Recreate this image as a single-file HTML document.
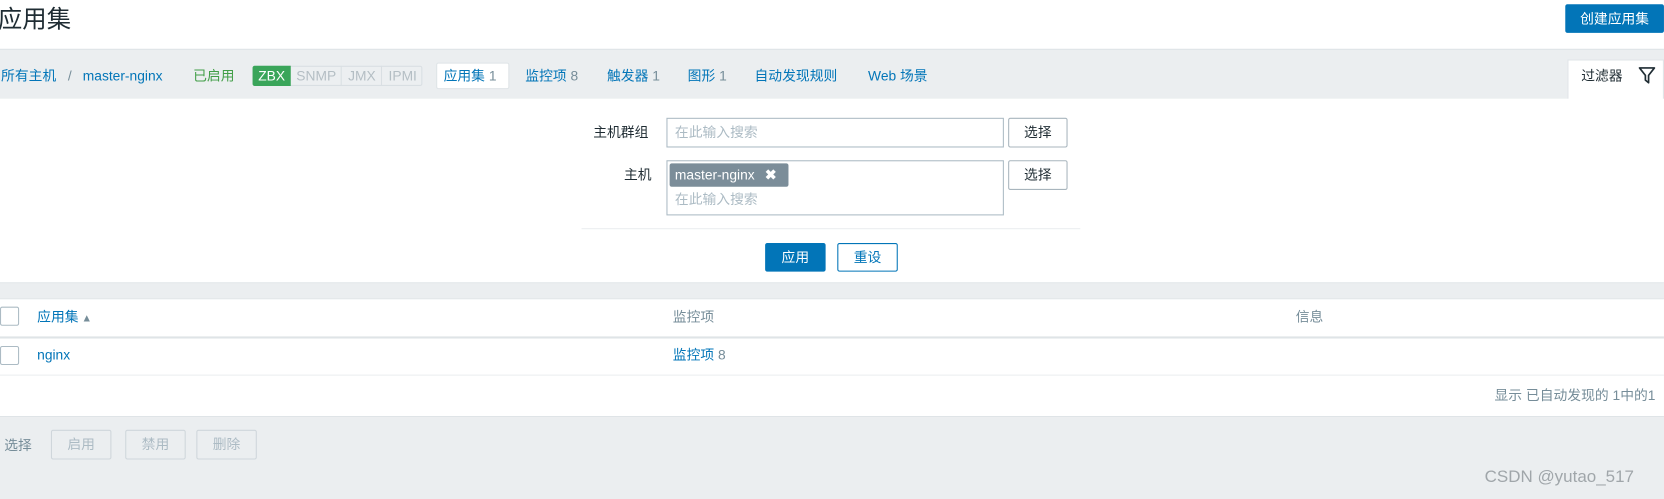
<!DOCTYPE html>
<html><head><meta charset="utf-8"><style>
*{box-sizing:border-box;margin:0;padding:0}
html,body{width:1664px;height:498px;overflow:hidden;background:#ebeef0}
#w{position:absolute;left:0;top:0;width:1568px;height:470px;transform:scale(1.0612);transform-origin:0 0;font-family:"Liberation Sans","Noto Sans CJK SC",sans-serif;font-size:13px;color:#1f2c33}
.a{position:absolute;white-space:nowrap;line-height:18px}
.l{color:#0275b8}
.g{color:#768d99}
.btn{position:absolute;border:1px solid #0275b8;background:#0275b8;color:#fff;border-radius:2px;text-align:center}
.wb{position:absolute;border:1px solid #a8b5bd;background:#fff;border-radius:2px;text-align:center;line-height:25px}
.cb{position:absolute;width:18px;height:18px;border:1px solid #acbbc4;border-radius:2px;background:#fff}
.db{position:absolute;border:1px solid #cfd6db;background:#ebeef0;color:#acbbc4;border-radius:2px;text-align:center;line-height:26px;width:57px;height:28px}
</style></head><body><div id="w">
<div class="a" style="left:0;top:0;width:1568px;height:46px;background:#fff"></div>
<div class="a" style="left:-2px;top:3px;font-size:23px;line-height:30px;color:#1f2c33">应用集</div>
<div class="btn" style="left:1475px;top:4px;width:93px;height:27px;line-height:25px">创建应用集</div>
<div class="a" style="left:0;top:46px;width:1568px;height:1px;background:#dfe4e7"></div>
<div class="a l" style="left:1px;top:63px">所有主机</div>
<div class="a g" style="left:64px;top:63px">/</div>
<div class="a l" style="left:78px;top:63px">master-nginx</div>
<div class="a" style="left:182px;top:63px;color:#429e47">已启用</div>
<div class="a" style="left:238px;top:62px;width:160px;height:19px;border:1px solid #d9dfe3;border-radius:2px;background:#eceff1"></div>
<div class="a" style="left:238px;top:62px;width:36px;height:19px;background:#3aa55a;color:#fff;text-align:center;line-height:19px;border-radius:2px 0 0 2px">ZBX</div>
<div class="a" style="left:275px;top:62px;width:47px;line-height:19px;text-align:center;color:#b4bec4;border-right:1px solid #d9dfe3">SNMP</div>
<div class="a" style="left:323px;top:62px;width:37px;line-height:19px;text-align:center;color:#b4bec4;border-right:1px solid #d9dfe3">JMX</div>
<div class="a" style="left:361px;top:62px;width:37px;line-height:19px;text-align:center;color:#b4bec4">IPMI</div>
<div class="a" style="left:411px;top:59px;width:69px;height:25px;background:#fff;border:1px solid #dfe4e7;border-radius:2px"></div>
<div class="a" style="left:418px;top:63px"><span class="l">应用集</span> <span class="g">1</span></div>
<div class="a" style="left:495px;top:63px"><span class="l">监控项</span> <span class="g">8</span></div>
<div class="a" style="left:572px;top:63px"><span class="l">触发器</span> <span class="g">1</span></div>
<div class="a" style="left:648px;top:63px"><span class="l">图形</span> <span class="g">1</span></div>
<div class="a l" style="left:711px;top:63px">自动发现规则</div>
<div class="a l" style="left:818px;top:63px">Web 场景</div>
<div class="a" style="left:1477px;top:56px;width:91px;height:38px;background:#fff;border:1px solid #dfe4e7;border-bottom:none"></div>
<div class="a" style="left:1490px;top:63px">过滤器</div>
<svg class="a" style="left:1543px;top:62px" width="18" height="18" viewBox="0 0 18 18"><path d="M2 2H16L10.5 9V16L7.5 13.5V9Z" fill="none" stroke="#1f2c33" stroke-width="1.6" stroke-linejoin="round"/></svg>
<div class="a" style="left:0;top:93px;width:1568px;height:174px;background:#fff;border-bottom:1px solid #dfe4e7"></div>
<div class="a" style="left:559px;top:116px">主机群组</div>
<div class="a" style="left:588px;top:156px">主机</div>
<div class="a" style="left:628px;top:111px;width:318px;height:28px;border:1px solid #acbbc4;background:#fff"></div>
<div class="a" style="left:636px;top:116px;color:#acbbc4">在此输入搜索</div>
<div class="wb" style="left:950px;top:111px;width:56px;height:28px">选择</div>
<div class="a" style="left:628px;top:151px;width:318px;height:52px;border:1px solid #acbbc4;background:#fff"></div>
<div class="a" style="left:631px;top:154px;width:112px;height:22px;background:#7b8d99;border-radius:2px;color:#fff;line-height:22px;padding-left:5px">master-nginx <b style="margin-left:6px">✖</b></div>
<div class="a" style="left:636px;top:179px;color:#acbbc4">在此输入搜索</div>
<div class="wb" style="left:950px;top:151px;width:56px;height:28px">选择</div>
<div class="a" style="left:548px;top:215px;width:470px;height:1px;background:#ebeef0"></div>
<div class="btn" style="left:721px;top:229px;width:57px;height:27px;line-height:25px">应用</div>
<div class="a" style="left:789px;top:229px;width:57px;height:27px;line-height:25px;border:1px solid #0275b8;color:#0275b8;text-align:center;border-radius:2px;background:#fff">重设</div>
<div class="a" style="left:0;top:281px;width:1568px;height:112px;background:#fff;border-top:1px solid #dfe4e7;border-bottom:1px solid #dfe4e7"></div>
<div class="a" style="left:0;top:317px;width:1568px;height:2px;background:#dfe4e7"></div>
<div class="a" style="left:0;top:353px;width:1568px;height:1px;background:#ebeef0"></div>
<div class="cb" style="left:0;top:289px"></div>
<div class="a l" style="left:35px;top:290px">应用集<span style="color:#768d99;font-size:10px"> ▲</span></div>
<div class="a g" style="left:634px;top:290px">监控项</div>
<div class="a g" style="left:1221px;top:290px">信息</div>
<div class="cb" style="left:0;top:326px"></div>
<div class="a l" style="left:35px;top:326px">nginx</div>
<div class="a" style="left:634px;top:326px"><span class="l">监控项</span> <span class="g">8</span></div>
<div class="a g" style="right:8px;top:364px">显示 已自动发现的 1中的1</div>
<div class="a g" style="left:4px;top:411px">选择</div>
<div class="db" style="left:48px;top:405px">启用</div>
<div class="db" style="left:118px;top:405px">禁用</div>
<div class="db" style="left:185px;top:405px">删除</div>
<div class="a" style="left:1399px;top:440px;font-size:16px;line-height:20px;color:#a0a6aa">CSDN @yutao_517</div>
</div></body></html>
